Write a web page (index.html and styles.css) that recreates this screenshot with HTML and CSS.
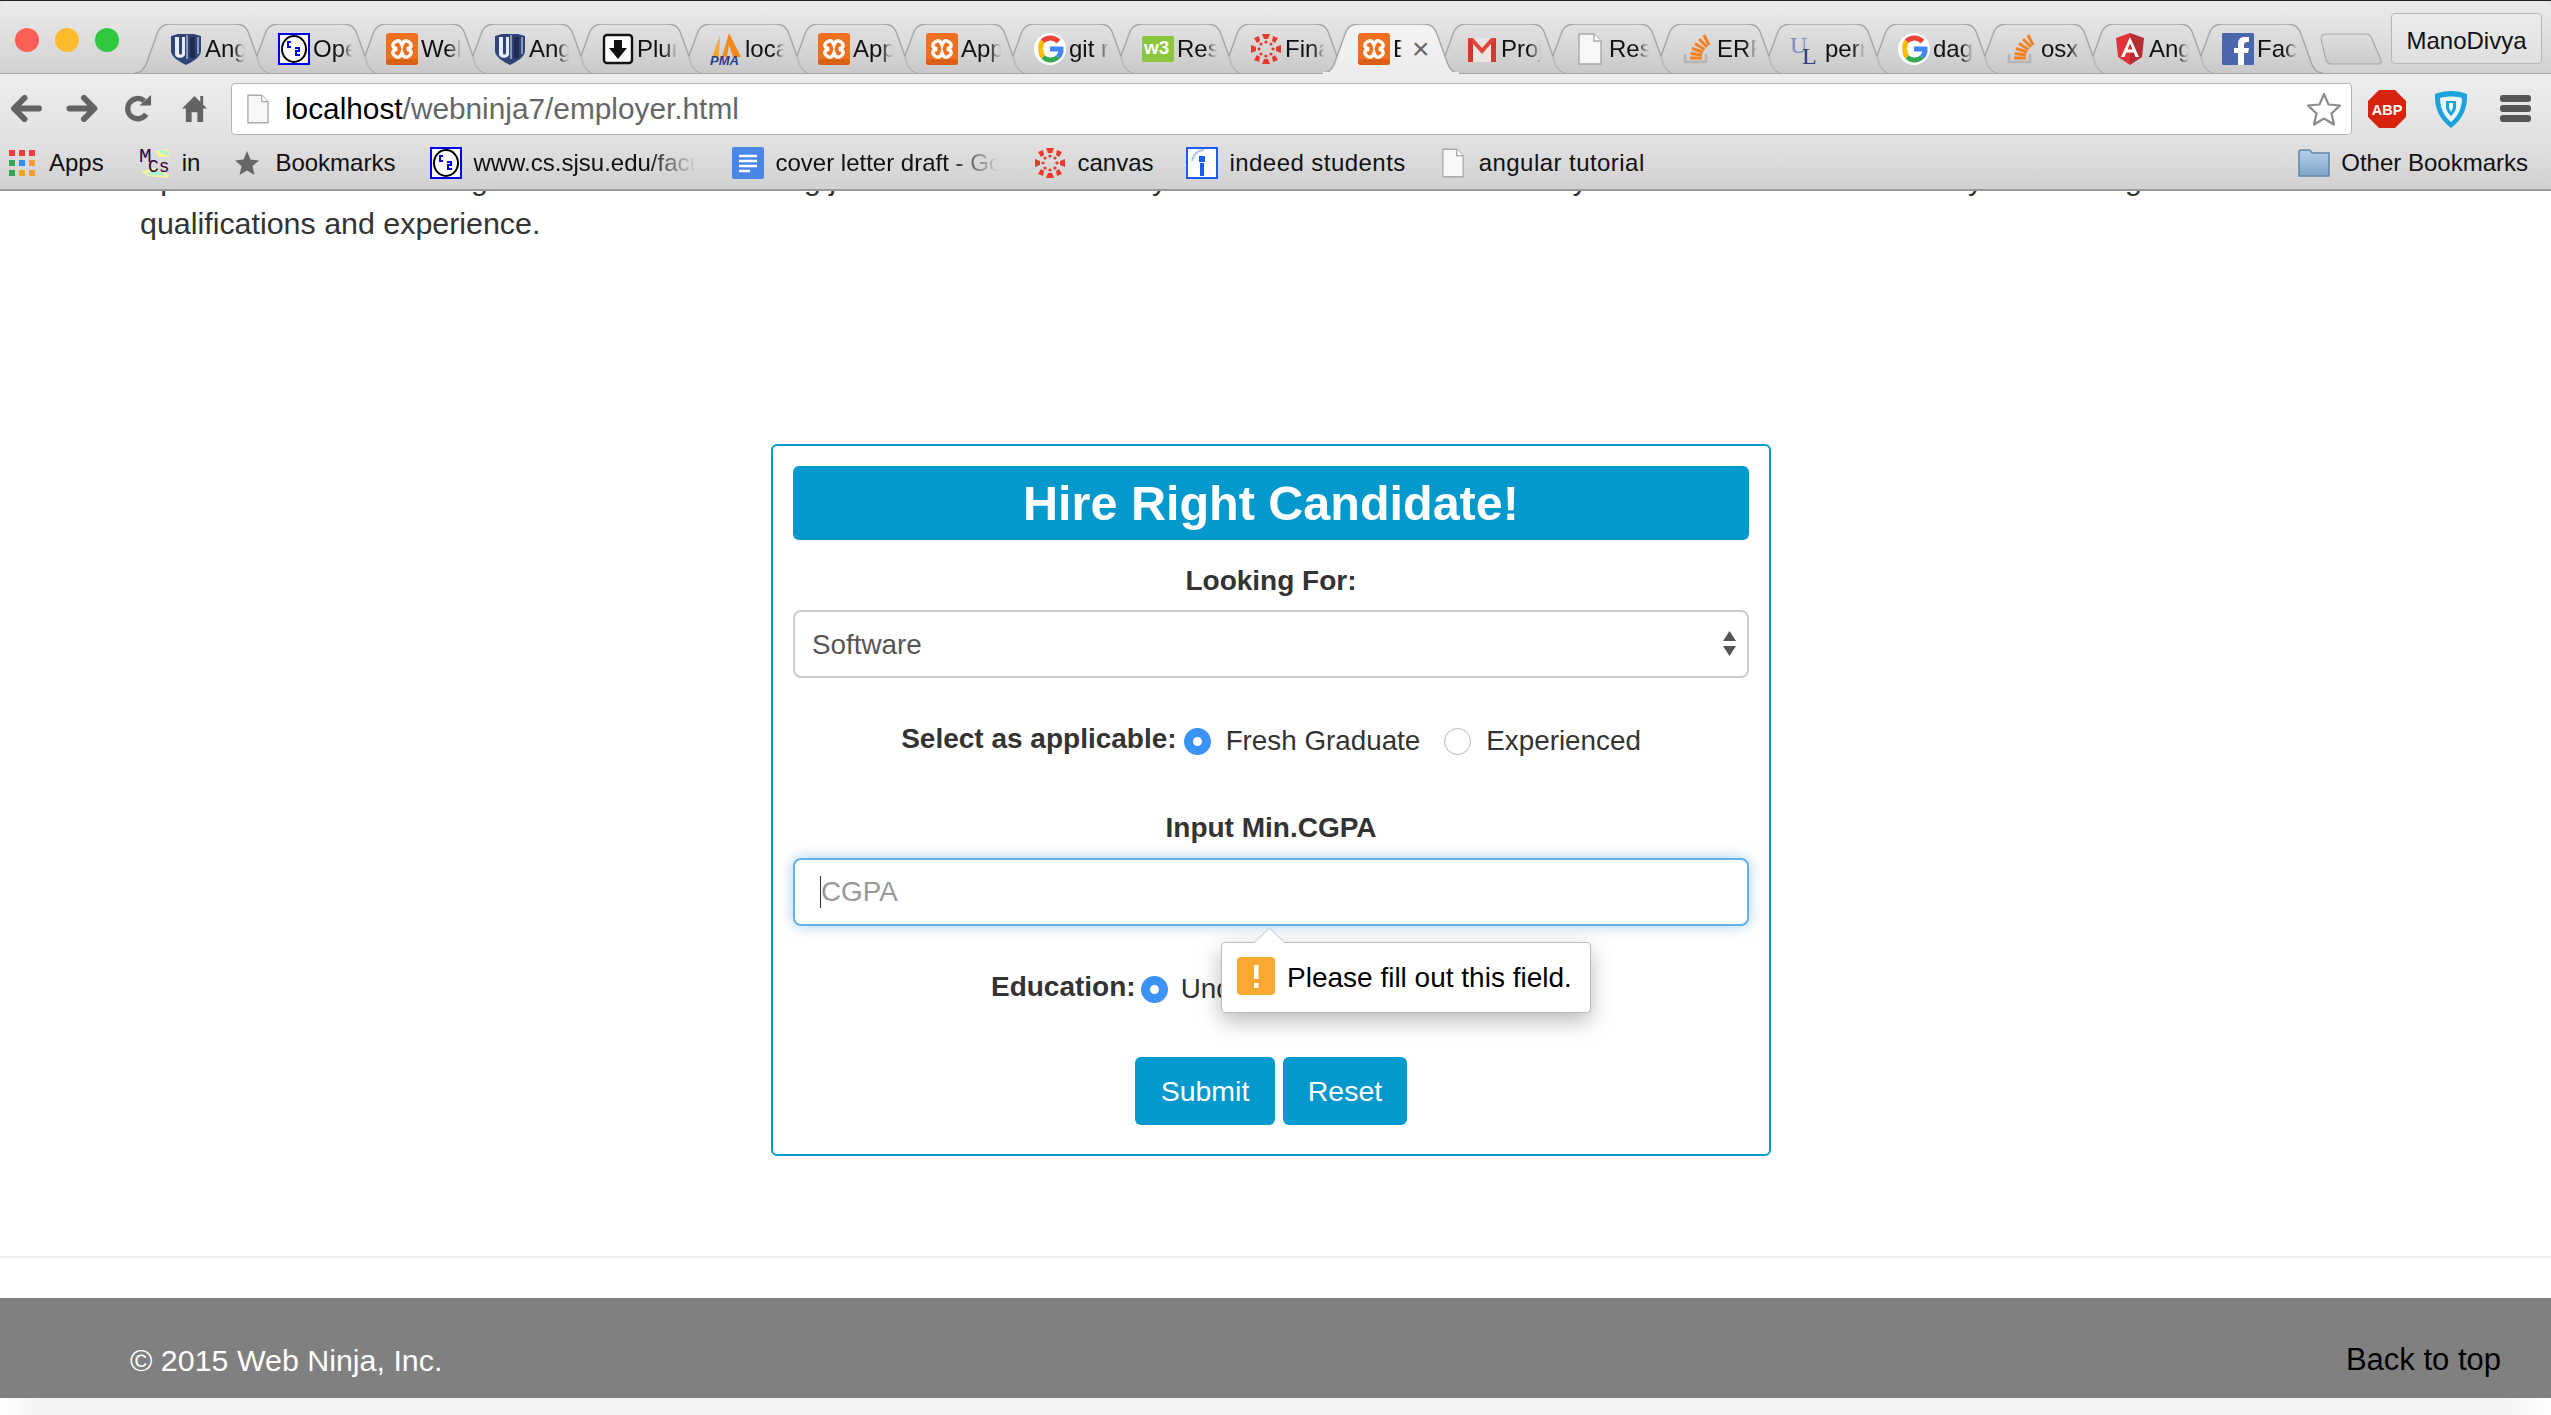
FILE: index.html
```html
<!DOCTYPE html>
<html lang="en">
<head>
    <meta charset="UTF-8">
    <meta name="viewport" content="width=device-width, initial-scale=1.0">
    <title>Employer</title>
    <link rel="stylesheet" href="styles.css">
</head>
<body>

    <!-- shared shapes for tabs and favicons -->
    <svg class="sprite" aria-hidden="true">
        <defs>
            <linearGradient id="tabFill" x1="0" y1="0" x2="0" y2="1">
                <stop offset="0" stop-color="#e2e2e2"/>
                <stop offset="1" stop-color="#c9c9c9"/>
            </linearGradient>
            <linearGradient id="tabActive" x1="0" y1="0" x2="0" y2="1">
                <stop offset="0" stop-color="#f4f4f4"/>
                <stop offset="1" stop-color="#ececec"/>
            </linearGradient>
            <linearGradient id="folderFill" x1="0" y1="0" x2="0" y2="1">
                <stop offset="0" stop-color="#b4cfe6"/>
                <stop offset="1" stop-color="#7fa6c9"/>
            </linearGradient>
            <linearGradient id="newTabFill" x1="0" y1="0" x2="0" y2="1">
                <stop offset="0" stop-color="#dedede"/>
                <stop offset="1" stop-color="#cbcbcb"/>
            </linearGradient>
        </defs>
        <symbol id="tabFirst" viewBox="0 0 136 49" preserveAspectRatio="none">
            <path d="M0 49C6 49 10 44 12 38L22 10C24 3 28 0 36 0H100C108 0 112 3 114 10L124 38C126 44 130 49 136 49Z" fill="url(#tabFill)"/>
            <path d="M0 49C6 49 10 44 12 38L22 10C24 3 28 0 36 0H100C108 0 112 3 114 10L124 38C126 44 130 49 136 49" fill="none" stroke="#a6a6a6" stroke-width="1.4"/>
        </symbol>
        <symbol id="tabNext" viewBox="0 0 136 49" preserveAspectRatio="none">
            <path d="M14 32L22 10C24 3 28 0 36 0H100C108 0 112 3 114 10L124 38C126 44 130 49 136 49H28C22 49 18 44 16 38Z" fill="url(#tabFill)"/>
            <path d="M14 32L22 10C24 3 28 0 36 0H100C108 0 112 3 114 10L124 38C126 44 130 49 136 49" fill="none" stroke="#a6a6a6" stroke-width="1.4"/>
        </symbol>
        <symbol id="tabOn" viewBox="0 0 136 49" preserveAspectRatio="none">
            <path d="M0 49C6 49 10 44 12 38L22 10C24 3 28 0 36 0H100C108 0 112 3 114 10L124 38C126 44 130 49 136 49Z" fill="url(#tabActive)"/>
            <path d="M0 49C6 49 10 44 12 38L22 10C24 3 28 0 36 0H100C108 0 112 3 114 10L124 38C126 44 130 49 136 49" fill="none" stroke="#a6a6a6" stroke-width="1.4"/>
        </symbol>

        <symbol id="icoUi" viewBox="0 0 32 32">
            <path d="M1 3L8 1H24L31 3V18C31 24 22 29 16 32C10 29 1 24 1 18Z" fill="#2f4379"/>
            <path d="M5 4H9V20C9 22 12 22 12 20V4H15V21C15 26 5 26 5 21Z" fill="#e8ecf6"/>
            <rect x="20" y="4" width="5" height="21" fill="#1f2c4f"/>
            <rect x="16" y="2" width="2" height="24" fill="#8b97b8"/>
            <rect x="27" y="4" width="2" height="17" fill="#8b97b8"/>
        </symbol>
        <symbol id="icoCs" viewBox="0 0 32 32">
            <rect x="1" y="1" width="30" height="30" fill="#fff" stroke="#0000f0" stroke-width="2"/>
            <ellipse cx="16" cy="16" rx="12" ry="13" fill="#fff" stroke="#000" stroke-width="2"/>
            <path d="M13 9H10V14H13M17 15H21V18H18V22H22" fill="none" stroke="#0000f0" stroke-width="2"/>
        </symbol>
        <symbol id="icoXampp" viewBox="0 0 32 32">
            <rect width="32" height="32" rx="3" fill="#f0701f"/>
            <rect y="26" width="32" height="6" rx="3" fill="#d85f14"/>
            <path d="M9 9C13 6 15 9 16 12C17 9 19 6 23 9C27 12 25 15 21 16C25 17 27 20 23 23C19 26 17 23 16 20C15 23 13 26 9 23C5 20 7 17 11 16C7 15 5 12 9 9Z" fill="none" stroke="#fff" stroke-width="3.4"/>
        </symbol>
        <symbol id="icoPlunk" viewBox="0 0 32 32">
            <rect x="2" y="2" width="28" height="28" rx="3" fill="#fff" stroke="#111" stroke-width="2.4"/>
            <path d="M12 7H20V15H25L16 26L7 15H12Z" fill="#111"/>
        </symbol>
        <symbol id="icoPma" viewBox="0 0 32 32">
            <path d="M10 2L2 24H9Z" fill="#f9a63a"/>
            <path d="M19 0L12 24H17L19 12L23 24H31Z" fill="#f08a1d"/>
            <text x="0" y="32" class="ico-pma-text">PMA</text>
        </symbol>
        <symbol id="icoGoogle" viewBox="0 0 32 32">
            <circle cx="16" cy="16" r="16" fill="#fff"/>
            <path d="M24.5 8.5A11 11 0 0 0 8.5 8.2" fill="none" stroke="#ea4335" stroke-width="5"/>
            <path d="M8.5 8.2A11 11 0 0 0 7 16" fill="none" stroke="#fbbc05" stroke-width="5"/>
            <path d="M7 16A11 11 0 0 0 9 24" fill="none" stroke="#fbbc05" stroke-width="5"/>
            <path d="M9 24A11 11 0 0 0 24 24" fill="none" stroke="#34a853" stroke-width="5"/>
            <path d="M24 24A10 10 0 0 0 27 16H16" fill="none" stroke="#4285f4" stroke-width="5"/>
        </symbol>
        <symbol id="icoW3" viewBox="0 0 32 32">
            <rect y="3" width="32" height="26" rx="2" fill="#8cc63e"/>
            <text x="2" y="21" class="ico-w3-text">w3</text>
        </symbol>
        <symbol id="icoCanvas" viewBox="0 0 32 32">
            <g fill="#e9392d">
                <path d="M12 1H20L18 6H14Z"/>
                <path d="M12 31H20L18 26H14Z"/>
                <path d="M1 12V20L6 18V14Z"/>
                <path d="M31 12V20L26 18V14Z"/>
                <path d="M4 5L9 3L10 8L7 10Z"/>
                <path d="M28 5L23 3L22 8L25 10Z"/>
                <path d="M4 27L9 29L10 24L7 22Z"/>
                <path d="M28 27L23 29L22 24L25 22Z"/>
                <circle cx="16" cy="9" r="1.6"/>
                <circle cx="16" cy="23" r="1.6"/>
                <circle cx="9" cy="16" r="1.6"/>
                <circle cx="23" cy="16" r="1.6"/>
                <circle cx="11" cy="11" r="1.6"/>
                <circle cx="21" cy="11" r="1.6"/>
                <circle cx="11" cy="21" r="1.6"/>
                <circle cx="21" cy="21" r="1.6"/>
            </g>
        </symbol>
        <symbol id="icoGmail" viewBox="0 0 32 32">
            <rect x="2" y="5" width="28" height="24" fill="#e9e6e2"/>
            <path d="M2 5H7V29H2ZM25 5H30V29H25Z" fill="#d0392c"/>
            <path d="M2 5H7L16 15L25 5H30L16 21Z" fill="#e0463a"/>
        </symbol>
        <symbol id="icoDoc" viewBox="0 0 24 32">
            <path d="M1 1H16L23 8V31H1Z" fill="#f7f7f7" stroke="#a9a9a9" stroke-width="1.4"/>
            <path d="M16 1V8H23" fill="#fff" stroke="#a9a9a9" stroke-width="1.4"/>
        </symbol>
        <symbol id="icoSo" viewBox="0 0 32 32">
            <path d="M3 21V29H24V21" fill="none" stroke="#b5b5b5" stroke-width="2.6"/>
            <g stroke="#f48024" stroke-width="3" fill="none">
                <path d="M8 25H20"/>
                <path d="M8.5 20.5L20 22"/>
                <path d="M10 15.5L21 19"/>
                <path d="M13 10.5L22.5 16.5"/>
                <path d="M17 6L25 14"/>
                <path d="M22 2L27 12"/>
            </g>
        </symbol>
        <symbol id="icoUl" viewBox="0 0 32 32">
            <text x="0" y="20" class="ico-ul-u">U</text>
            <text x="12" y="31" class="ico-ul-l">L</text>
        </symbol>
        <symbol id="icoAngular" viewBox="0 0 32 32">
            <path d="M16 0L2 5L4 24L16 32Z" fill="#e23237"/>
            <path d="M16 0L30 5L28 24L16 32Z" fill="#b52e31"/>
            <path d="M16 4L7 24H10.5L12.3 19.5H19.7L21.5 24H25ZM13.6 16.5L16 10.5L18.4 16.5Z" fill="#fff"/>
        </symbol>
        <symbol id="icoFb" viewBox="0 0 32 32">
            <rect width="32" height="32" rx="1" fill="#4a66ad"/>
            <path d="M22 32V20H26L27 15H22V12C22 10 23 9 25 9H27V4C26 4 24 4 22 4C18 4 16 7 16 11V15H12V20H16V32Z" fill="#fff"/>
        </symbol>
    </svg>

    <header class="browser">
        <div class="tabstrip">
            <div class="lights">
                <span class="light light-red"></span>
                <span class="light light-yellow"></span>
                <span class="light light-green"></span>
            </div>
            <div class="tabs">
                <div class="tab"><svg class="tab-shape"><use href="#tabFirst"/></svg><svg class="favicon"><use href="#icoUi"/></svg><span class="tab-title">Angular</span></div>
                <div class="tab"><svg class="tab-shape"><use href="#tabNext"/></svg><svg class="favicon"><use href="#icoCs"/></svg><span class="tab-title">Open</span></div>
                <div class="tab"><svg class="tab-shape"><use href="#tabNext"/></svg><svg class="favicon"><use href="#icoXampp"/></svg><span class="tab-title">Web</span></div>
                <div class="tab"><svg class="tab-shape"><use href="#tabNext"/></svg><svg class="favicon"><use href="#icoUi"/></svg><span class="tab-title">Angular</span></div>
                <div class="tab"><svg class="tab-shape"><use href="#tabNext"/></svg><svg class="favicon"><use href="#icoPlunk"/></svg><span class="tab-title">Plunker</span></div>
                <div class="tab"><svg class="tab-shape"><use href="#tabNext"/></svg><svg class="favicon"><use href="#icoPma"/></svg><span class="tab-title">localhost</span></div>
                <div class="tab"><svg class="tab-shape"><use href="#tabNext"/></svg><svg class="favicon"><use href="#icoXampp"/></svg><span class="tab-title">Apps</span></div>
                <div class="tab"><svg class="tab-shape"><use href="#tabNext"/></svg><svg class="favicon"><use href="#icoXampp"/></svg><span class="tab-title">Apps</span></div>
                <div class="tab"><svg class="tab-shape"><use href="#tabNext"/></svg><svg class="favicon"><use href="#icoGoogle"/></svg><span class="tab-title">git r</span></div>
                <div class="tab"><svg class="tab-shape"><use href="#tabNext"/></svg><svg class="favicon"><use href="#icoW3"/></svg><span class="tab-title">Resp</span></div>
                <div class="tab"><svg class="tab-shape"><use href="#tabNext"/></svg><svg class="favicon"><use href="#icoCanvas"/></svg><span class="tab-title">Final</span></div>
                <div class="tab tab-active"><svg class="tab-shape"><use href="#tabOn"/></svg><svg class="favicon"><use href="#icoXampp"/></svg><span class="tab-title tab-title-short">E</span><span class="tab-close">×</span></div>
                <div class="tab"><svg class="tab-shape"><use href="#tabNext"/></svg><svg class="favicon"><use href="#icoGmail"/></svg><span class="tab-title">Project</span></div>
                <div class="tab"><svg class="tab-shape"><use href="#tabNext"/></svg><svg class="favicon favicon-doc"><use href="#icoDoc"/></svg><span class="tab-title">Resume</span></div>
                <div class="tab"><svg class="tab-shape"><use href="#tabNext"/></svg><svg class="favicon"><use href="#icoSo"/></svg><span class="tab-title">ERR</span></div>
                <div class="tab"><svg class="tab-shape"><use href="#tabNext"/></svg><svg class="favicon"><use href="#icoUl"/></svg><span class="tab-title">perm</span></div>
                <div class="tab"><svg class="tab-shape"><use href="#tabNext"/></svg><svg class="favicon"><use href="#icoGoogle"/></svg><span class="tab-title">dag</span></div>
                <div class="tab"><svg class="tab-shape"><use href="#tabNext"/></svg><svg class="favicon"><use href="#icoSo"/></svg><span class="tab-title">osx</span></div>
                <div class="tab"><svg class="tab-shape"><use href="#tabNext"/></svg><svg class="favicon"><use href="#icoAngular"/></svg><span class="tab-title">Angular</span></div>
                <div class="tab"><svg class="tab-shape"><use href="#tabNext"/></svg><svg class="favicon"><use href="#icoFb"/></svg><span class="tab-title">Facebook</span></div>
            </div>
            <svg class="new-tab" viewBox="0 0 62 32"><path d="M1 6C1 3 3 1 6 1H46C49 1 51 3 52 6L61 27C62 30 60 31 58 31H12C9 31 7 30 6 27Z" fill="url(#newTabFill)" stroke="#a9a9a9" stroke-width="1.2"/></svg>
            <div class="profile">ManoDivya</div>
        </div>

        <div class="toolbar">
            <svg class="nav-icon nav-back" viewBox="0 0 32 28"><path d="M14 3L3 14L14 25M4 14H29" fill="none" stroke="#636363" stroke-width="6" stroke-linecap="round" stroke-linejoin="round"/></svg>
            <svg class="nav-icon nav-forward" viewBox="0 0 32 28"><path d="M18 3L29 14L18 25M28 14H3" fill="none" stroke="#636363" stroke-width="6" stroke-linecap="round" stroke-linejoin="round"/></svg>
            <svg class="nav-icon nav-reload" viewBox="0 0 28 28"><path d="M22 20A10.500 10.500 0 1 1 20 6" fill="none" stroke="#636363" stroke-width="5.500"/><path d="M15 11H27V0Z" fill="#636363"/></svg>
            <svg class="nav-icon nav-home" viewBox="0 0 26 28"><path d="M13 1L26 14H22V28H16V18H10V28H4V14H0Z" fill="#636363"/><rect x="19" y="1" width="3" height="9" fill="#636363"/></svg>
            <div class="urlbar">
                <svg class="url-page"><use href="#icoDoc"/></svg>
                <span class="url-text"><span class="url-host">localhost</span>/webninja7/employer.html</span>
                <svg class="url-star" viewBox="0 0 36 34"><path d="M18 2L22.500 12.500L34 13.500L25.500 21.500L28 32.500L18 26.500L8 32.500L10.500 21.500L2 13.500L13.500 12.500Z" fill="#fff" stroke="#8a8a8a" stroke-width="2.200" stroke-linejoin="round"/></svg>
            </div>
            <svg class="ext-abp" viewBox="0 0 38 38"><path d="M11 0H27L38 11V27L27 38H11L0 27V11Z" fill="#d8230f"/><text x="19" y="24.500" class="abp-text">ABP</text></svg>
            <svg class="ext-shield" viewBox="0 0 34 38"><path d="M1 4C11 0 23 0 33 4C34 18 28 30 17 38C6 30 0 18 1 4Z" fill="#1ba3dc"/><path d="M6 8C13 6 21 6 28 8C28 18 24 26 17 32C10 26 6 18 6 8Z" fill="#e9f5fb"/><path d="M12 11H22V17C22 21 19 24 17 26C15 24 12 21 12 17Z" fill="#1ba3dc"/><path d="M15 13H19V18L17 22L15 18Z" fill="#e9f5fb"/></svg>
            <div class="menu-btn"><span></span><span></span><span></span></div>
        </div>

        <nav class="bookmarks">
            <a class="bookmark">
                <svg class="bm-icon bm-apps" viewBox="0 0 26 26">
                    <rect width="6" height="6" fill="#f23c3c"/><rect x="10" width="6" height="6" fill="#f23c3c"/><rect x="20" width="6" height="6" fill="#f23c3c"/>
                    <rect y="10" width="6" height="6" fill="#34a35b"/><rect x="10" y="10" width="6" height="6" fill="#2f8df0"/><rect x="20" y="10" width="6" height="6" fill="#f2a126"/>
                    <rect y="20" width="6" height="6" fill="#34a35b"/><rect x="10" y="20" width="6" height="6" fill="#f2a126"/><rect x="20" y="20" width="6" height="6" fill="#f2a126"/>
                </svg>
                Apps
            </a>
            <a class="bookmark">
                <svg class="bm-icon" viewBox="0 0 32 32">
                    <path d="M16 4L29 2L31 10L20 10ZM3 24L16 21L30 28L29 31L8 29Z" fill="#f7f59a"/>
                    <path d="M20 2L29 5L30 9L22 6ZM6 26L20 24L28 29L10 28Z" fill="#aff0d8"/>
                    <text x="0" y="15" class="mcs-m">M</text>
                    <text x="9" y="25" class="mcs-cs">Cs</text>
                </svg>
                in
            </a>
            <a class="bookmark">
                <svg class="bm-icon bm-star" viewBox="0 0 24 24"><path d="M12 0L15.500 8.500L24 9.500L17.500 15L19.500 24L12 19.500L4.500 24L6.500 15L0 9.500L8.500 8.500Z" fill="#666"/></svg>
                Bookmarks
            </a>
            <a class="bookmark">
                <svg class="bm-icon"><use href="#icoCs"/></svg>
                <span class="bm-fade bm-fade-cs">www.cs.sjsu.edu/faculty</span>
            </a>
            <a class="bookmark">
                <svg class="bm-icon" viewBox="0 0 32 32"><rect width="32" height="32" rx="2" fill="#4a86e8"/><path d="M7 9H25M7 14H25M7 19H25M7 24H18" stroke="#fff" stroke-width="2.500"/></svg>
                <span class="bm-fade bm-fade-doc">cover letter draft - Google</span>
            </a>
            <a class="bookmark bookmark-tight">
                <svg class="bm-icon"><use href="#icoCanvas"/></svg>
                canvas
            </a>
            <a class="bookmark bookmark-spaced">
                <svg class="bm-icon" viewBox="0 0 32 32"><rect x="1" y="1" width="30" height="30" fill="#fff" stroke="#1a5cf0" stroke-width="2"/><path d="M6 14C8 6 12 3 18 3" fill="none" stroke="#a8c4e8" stroke-width="2"/><rect x="13" y="9" width="6" height="6" fill="#1a5cf0"/><rect x="14" y="16" width="4" height="13" fill="#1a5cf0"/></svg>
                indeed students
            </a>
            <a class="bookmark bookmark-spaced">
                <svg class="bm-icon bm-doc"><use href="#icoDoc"/></svg>
                angular tutorial
            </a>
            <a class="bookmark bookmark-other">
                <svg class="bm-icon" viewBox="0 0 32 28"><path d="M1 27V3C1 1 2 1 3 1H11C13 1 13 4 15 4H31V27Z" fill="url(#folderFill)" stroke="#5f86a8" stroke-width="1.500"/></svg>
                Other Bookmarks
            </a>
        </nav>
    </header>

    <main class="page">
        <p class="intro">Spot the talent for a hiring need from the site using job tools built for the duty and then filter all the results by the stated level or the faculty and the big list of all the<br>qualifications and experience.</p>

        <form class="hire-card">
            <h2 class="hire-title">Hire Right Candidate!</h2>

            <label class="field-label label-looking" for="lookingFor">Looking For:</label>
            <div class="select-wrap">
                <select id="lookingFor" class="field">
                    <option>Software</option>
                    <option>Hardware</option>
                </select>
                <svg class="select-arrows" viewBox="0 0 13 25"><path d="M6.500 0L13 10H0ZM6.500 25L0 15H13Z" fill="#555"/></svg>
            </div>

            <div class="radio-row row-applicable">
                <span class="radio-label">Select as applicable:</span>
                <input type="radio" name="level" class="radio" checked>
                <span class="radio-text">Fresh Graduate</span>
                <input type="radio" name="level" class="radio radio-next">
                <span class="radio-text">Experienced</span>
            </div>

            <label class="field-label label-cgpa" for="cgpa">Input Min.CGPA</label>
            <div class="input-wrap">
                <input id="cgpa" class="field field-focus" type="text" placeholder="CGPA">
                <span class="caret"></span>
            </div>

            <div class="radio-row row-education">
                <span class="radio-label">Education:</span>
                <input type="radio" name="edu" class="radio" checked>
                <span class="radio-text">Undergraduate</span>
                <input type="radio" name="edu" class="radio radio-next">
                <span class="radio-text">Graduate</span>
            </div>

            <div class="form-buttons">
                <button type="button" class="btn btn-submit">Submit</button>
                <button type="button" class="btn btn-reset">Reset</button>
            </div>

            <div class="bubble">
                <svg class="bubble-tip" viewBox="0 0 31 17"><path d="M0 16L15.500 1L31 16" fill="#fff" stroke="#bdbdbd" stroke-width="1"/></svg>
                <svg class="bubble-icon" viewBox="0 0 38 38"><rect width="38" height="38" rx="4" fill="#f9a832"/><rect x="17" y="8" width="4.500" height="14" fill="#fff"/><rect x="17" y="26" width="4.500" height="5" fill="#fff"/></svg>
                <span>Please fill out this field.</span>
            </div>
        </form>

        <hr class="divider">

        <footer class="site-footer">
            <span class="copyright">© 2015 Web Ninja, Inc.</span>
            <a class="back-top">Back to top</a>
        </footer>
        <div class="footer-edge"></div>
    </main>

</body>
</html>
```

FILE: styles.css
```css
html, body {
    height: 100%;
    margin: 0;
    overflow: hidden;
}
body {
    font-family: "Liberation Sans", Arial, sans-serif;
    color: #333;
    background-color: white;
}
.sprite {
    position: absolute;
    width: 0;
    height: 0;
}

/* browser frame */
.browser {
    position: relative;
    z-index: 5;
    height: 191px;
    border-top: 1px solid #222;
    box-sizing: border-box;
    background: #e2e2e2;
}
.tabstrip {
    display: flex;
    height: 73px;
    box-sizing: border-box;
    border-bottom: 1px solid #a6a6a6;
    background: linear-gradient(#ebebeb, #d2d2d2);
    border-radius: 8px 8px 0 0;
}
.lights {
    display: flex;
    gap: 16px;
    width: 135px;
    padding: 27px 0 0 15px;
    box-sizing: border-box;
}
.light {
    width: 24px;
    height: 24px;
    border-radius: 50%;
}
.light-red { background-color: #fc5f57; }
.light-yellow { background-color: #fdbb2e; }
.light-green { background-color: #2fc840; }
.tabs {
    display: flex;
    padding-top: 23px;
    height: 49px;
}
.tab {
    position: relative;
    display: flex;
    align-items: center;
    flex: none;
    width: 136px;
    height: 49px;
    margin-right: -28px;
    padding-left: 35px;
    box-sizing: border-box;
    font-size: 24px;
    color: #111;
}
.tab-shape {
    position: absolute;
    left: 0;
    top: 0;
    width: 136px;
    height: 49px;
}
.tab-active {
    z-index: 2;
}
.tab-active::after {
    content: "";
    position: absolute;
    left: 0;
    right: 0;
    bottom: -1px;
    height: 2px;
    background-color: #ececec;
}
.favicon {
    position: relative;
    flex: none;
    width: 32px;
    height: 32px;
}
.favicon-doc {
    width: 24px;
    margin: 0 4px;
}
.tab-title {
    position: relative;
    width: 40px;
    margin-left: 3px;
    white-space: nowrap;
    overflow: hidden;
    -webkit-mask-image: linear-gradient(to right, #000 70%, transparent);
    mask-image: linear-gradient(to right, #000 70%, transparent);
}
.tab-title-short {
    width: 9px;
}
.tab-close {
    position: relative;
    margin-left: 10px;
    font-size: 30px;
    color: #666;
}
.new-tab {
    flex: none;
    width: 62px;
    height: 32px;
    margin: 32px 0 0 25px;
}
.profile {
    flex: none;
    width: 151px;
    height: 51px;
    margin: 12px 0 0 9px;
    box-sizing: border-box;
    border: 1px solid #b5b5b5;
    border-radius: 4px;
    font-size: 24px;
    line-height: 54px;
    text-align: center;
    color: #111;
    background: linear-gradient(#ececec, #dedede);
}

.toolbar {
    display: flex;
    align-items: center;
    height: 63px;
    padding-top: 6px;
    box-sizing: border-box;
    background: linear-gradient(#ededed, #e2e2e2);
}
.nav-icon {
    flex: none;
    height: 27px;
}
.nav-back { width: 31px; margin-left: 11px; }
.nav-forward { width: 32px; margin-left: 24px; }
.nav-reload { width: 27px; margin-left: 27px; }
.nav-home { width: 25px; margin-left: 30px; }
.urlbar {
    display: flex;
    align-items: center;
    flex: none;
    width: 2121px;
    height: 52px;
    margin: 0 0 0 24px;
    padding: 0 15px;
    box-sizing: border-box;
    border: 1px solid #b3b3b3;
    border-radius: 4px;
    background-color: white;
}
.url-page {
    flex: none;
    width: 22px;
    height: 30px;
}
.url-text {
    margin-left: 16px;
    font-size: 29.8px;
    color: #666;
}
.url-host {
    color: #000;
}
.url-star {
    flex: none;
    width: 36px;
    height: 34px;
    margin-left: auto;
    margin-right: -6px;
}
.ext-abp {
    flex: none;
    width: 38px;
    height: 38px;
    margin-left: 16px;
}
.abp-text {
    font-family: "Liberation Sans", sans-serif;
    font-size: 14.500px;
    font-weight: bold;
    fill: white;
    text-anchor: middle;
}
.ext-shield {
    flex: none;
    width: 34px;
    height: 38px;
    margin-left: 28px;
}
.menu-btn {
    display: flex;
    flex-direction: column;
    gap: 3px;
    margin-left: 32px;
}
.menu-btn span {
    display: block;
    width: 31px;
    height: 7px;
    border-radius: 3px;
    background-color: #555;
}

.bookmarks {
    display: flex;
    align-items: center;
    height: 54px;
    padding-left: 9px;
    box-sizing: border-box;
    border-bottom: 2px solid #9b9b9b;
    background: linear-gradient(#e2e2e2, #d1d1d1);
    font-size: 24px;
    color: #111;
}
.bookmark {
    display: flex;
    align-items: center;
    gap: 11px;
    white-space: nowrap;
    margin-right: 35px;
}
.bookmark-tight {
    margin-right: 33px;
}
.bookmark-spaced {
    letter-spacing: 0.45px;
}
.bm-icon {
    flex: none;
    width: 32px;
    height: 32px;
}
.bm-apps {
    width: 26px;
    height: 26px;
    margin-right: 3px;
}
.bm-star {
    width: 24px;
    height: 24px;
    margin-right: 5px;
}
.bm-doc {
    width: 22px;
    margin: 0 4px 0 1px;
}
.bm-fade {
    overflow: hidden;
    -webkit-mask-image: linear-gradient(to right, #000 78%, transparent);
    mask-image: linear-gradient(to right, #000 78%, transparent);
}
.bm-fade-cs { width: 224px; }
.bm-fade-doc { width: 224px; }
.bookmark-other {
    margin-left: auto;
    margin-right: 23px;
}
.ico-pma-text {
    font-family: "Liberation Sans", sans-serif;
    font-size: 13px;
    font-style: italic;
    font-weight: bold;
    fill: #2e3f86;
}
.ico-w3-text {
    font-family: "Liberation Sans", sans-serif;
    font-size: 19px;
    font-weight: bold;
    fill: white;
}
.ico-ul-u, .ico-ul-l {
    font-family: "Liberation Serif", serif;
    font-size: 24px;
}
.ico-ul-u { fill: #7f8fbb; }
.ico-ul-l { fill: #2f4379; }
.mcs-m, .mcs-cs {
    font-family: "Liberation Mono", monospace;
    fill: #33003f;
}
.mcs-m { font-size: 21px; }
.mcs-cs { font-size: 18px; }

/* page */
.intro {
    margin: -34px 0 0;
    padding-left: 140px;
    font-size: 30.4px;
    line-height: 44px;
    white-space: nowrap;
}
.hire-card {
    position: relative;
    width: 1000px;
    margin: 199px 0 0 771px;
    padding: 20px 20px 29px;
    box-sizing: border-box;
    border: 2px solid #0499cd;
    border-radius: 6px;
}
.hire-title {
    height: 74px;
    margin: 0;
    border-radius: 6px;
    background-color: #0499cd;
    color: white;
    font-size: 48.500px;
    font-weight: bold;
    line-height: 74px;
    text-align: center;
}
.field-label {
    display: block;
    font-size: 28px;
    font-weight: bold;
    line-height: 30px;
    text-align: center;
}
.label-looking {
    margin: 26px 0 14px;
}
.label-cgpa {
    margin: 55px 0 15px;
}
.select-wrap, .input-wrap {
    position: relative;
}
.field {
    display: block;
    width: 100%;
    height: 68px;
    padding: 0 17px;
    box-sizing: border-box;
    border: 2px solid #ccc;
    border-radius: 8px;
    outline: none;
    appearance: none;
    background-color: white;
    color: #555;
    font-family: inherit;
    font-size: 27.800px;
}
.field-focus {
    padding-left: 26px;
    border-color: #66afe9;
    box-shadow: 0 0 14px rgba(102, 175, 233, 0.6);
}
.field-focus::placeholder {
    color: #999;
}
.select-arrows {
    position: absolute;
    right: 13px;
    top: 21px;
    width: 13px;
    height: 25px;
}
.caret {
    position: absolute;
    left: 27px;
    top: 18px;
    width: 1px;
    height: 32px;
    background-color: #333;
}
.radio-row {
    display: flex;
    align-items: center;
    justify-content: center;
    height: 34px;
    font-size: 27.800px;
}
.row-applicable {
    margin-top: 46px;
}
.row-education {
    margin-top: 46px;
    padding-right: 3px;
}
.row-education .radio:checked {
    margin: 0 13px 0 5px;
}
.radio-label {
    font-size: 28px;
    font-weight: bold;
    margin-top: -4px;
}
.radio {
    flex: none;
    width: 27px;
    height: 27px;
    margin: 0 15px 0 7px;
    box-sizing: border-box;
    appearance: none;
    border: 1px solid #b5b5b5;
    border-radius: 50%;
    background-color: white;
}
.radio:checked {
    border: 9.500px solid #3b93f7;
}
.radio-next {
    margin-left: 24px;
}
.form-buttons {
    display: flex;
    justify-content: center;
    gap: 8px;
    margin-top: 51px;
}
.btn {
    height: 68px;
    padding: 0;
    border: none;
    border-radius: 6px;
    background-color: #0499cd;
    color: white;
    font-family: inherit;
    font-size: 28.500px;
}
.btn-submit { width: 140px; }
.btn-reset { width: 124px; }

.bubble {
    position: absolute;
    left: 448px;
    top: 496px;
    display: flex;
    align-items: center;
    gap: 12px;
    width: 370px;
    height: 71px;
    padding-left: 15px;
    box-sizing: border-box;
    border: 1px solid #bdbdbd;
    border-radius: 4px;
    background-color: white;
    color: #000;
    font-size: 28px;
    box-shadow: 0 8px 22px rgba(0, 0, 0, 0.28);
}
.bubble-tip {
    position: absolute;
    left: 32px;
    top: -16px;
    width: 31px;
    height: 17px;
}
.bubble-icon {
    flex: none;
    width: 38px;
    height: 38px;
    margin-top: -3px;
}
.divider {
    height: 2px;
    margin: 100px 0 0;
    border: none;
    background-color: #eee;
}
.site-footer {
    display: flex;
    justify-content: space-between;
    align-items: center;
    height: 100px;
    margin-top: 40px;
    padding: 24px 50px 0 130px;
    box-sizing: border-box;
    background-color: #808080;
    font-size: 30.4px;
}
.copyright {
    color: white;
}
.back-top {
    color: #000;
    font-size: 31px;
}
.footer-edge {
    height: 18px;
    background: linear-gradient(to right, white, #f3f3f3 40px, #f3f3f3 2500px, white);
}
```
